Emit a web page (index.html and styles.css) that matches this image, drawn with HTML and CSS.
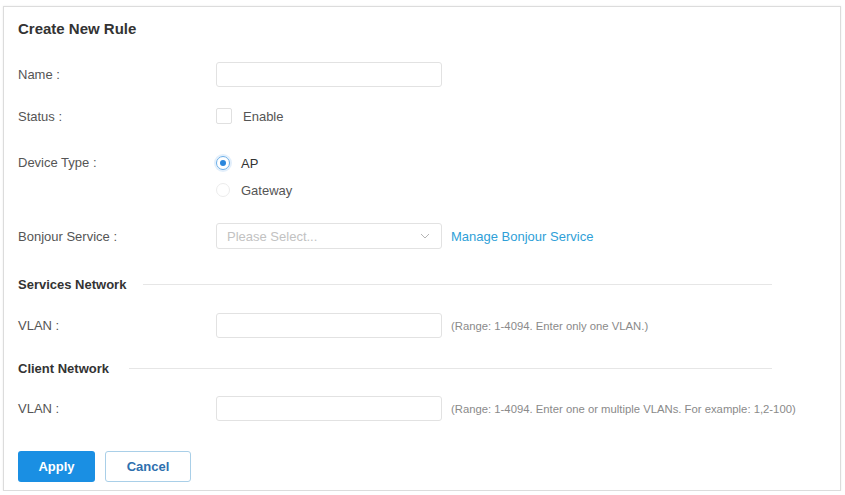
FILE: index.html
```html
<!DOCTYPE html>
<html lang="en">
<head>
    <meta charset="UTF-8">
    <meta name="viewport" content="width=device-width, initial-scale=1.0">
    <title>Create New Rule</title>
    <link rel="stylesheet" href="styles.css">
</head>
<body>
    <div class="card">
        <h2 class="title">Create New Rule</h2>

        <!-- Basic settings -->
        <div class="row row-name">
            <label class="label" for="ruleName">Name :</label>
            <input class="field" type="text" id="ruleName" />
        </div>

        <div class="row row-status">
            <span class="label">Status :</span>
            <label class="check">
                <span class="box"></span>
                <span>Enable</span>
            </label>
        </div>

        <div class="row row-device">
            <span class="label">Device Type :</span>
            <div class="radio-group">
                <label class="radio">
                    <span class="dot checked"></span>
                    <span class="radio-text">AP</span>
                </label>
                <label class="radio">
                    <span class="dot"></span>
                    <span>Gateway</span>
                </label>
            </div>
        </div>

        <div class="row row-bonjour">
            <span class="label">Bonjour Service :</span>
            <div class="field select">
                <span class="placeholder">Please Select...</span>
                <svg class="chevron" width="10" height="6" viewBox="0 0 10 6">
                    <polyline points="1,1 5,5 9,1" fill="none" stroke="#b5b5b5" stroke-width="1" />
                </svg>
            </div>
            <a class="link" href="#">Manage Bonjour Service</a>
        </div>

        <!-- Services network -->
        <div class="section section-services">
            <span class="section-title">Services Network</span>
            <span class="section-line"></span>
        </div>

        <div class="row row-vlan1">
            <label class="label" for="serviceVlan">VLAN :</label>
            <input class="field" type="text" id="serviceVlan" />
            <span class="hint">(Range: 1-4094. Enter only one VLAN.)</span>
        </div>

        <!-- Client network -->
        <div class="section section-client">
            <span class="section-title">Client Network</span>
            <span class="section-line"></span>
        </div>

        <div class="row row-vlan2">
            <label class="label" for="clientVlan">VLAN :</label>
            <input class="field" type="text" id="clientVlan" />
            <span class="hint">(Range: 1-4094. Enter one or multiple VLANs. For example: 1,2-100)</span>
        </div>

        <div class="actions">
            <button class="btn btn-apply">Apply</button>
            <button class="btn btn-cancel">Cancel</button>
        </div>
    </div>
</body>
</html>
```

FILE: styles.css
```css
body {
    margin: 0;
    background-color: #ffffff;
    font-family: "Liberation Sans", Arial, sans-serif;
    font-size: 13px;
    color: #555555;
}
.card {
    margin: 6px 3px 0 3px;
    width: 838px;
    height: 485px;
    box-sizing: border-box;
    border: 1px solid #dcdcdc;
    box-shadow: 0 0 2px rgba(0, 0, 0, 0.08);
    padding: 0 0 0 14px;
    display: flex;
    flex-direction: column;
}
.title {
    margin: 9px 0 0 0;
    height: 26px;
    line-height: 26px;
    font-size: 15px;
    font-weight: bold;
    color: #333333;
}
.row {
    display: flex;
    align-items: center;
}
.label {
    width: 198px;
    flex-shrink: 0;
    color: #555555;
}
.row-name { margin-top: 20px; height: 25px; }
.row-status { margin-top: 21px; height: 16px; }
.row-device { margin-top: 29px; align-items: flex-start; }
.row-device .label { line-height: 20px; }
.row-bonjour { margin-top: 23px; height: 26px; }
.row-vlan1 { margin-top: 21px; height: 25px; }
.row-vlan2 { margin-top: 20px; height: 25px; }
.field {
    width: 226px;
    height: 25px;
    box-sizing: border-box;
    border: 1px solid #e2e2e2;
    border-radius: 3px;
    padding: 0 10px;
    font-family: inherit;
    font-size: 13px;
    outline: none;
}
.check {
    display: flex;
    align-items: center;
    gap: 11px;
    color: #555555;
}
.box {
    width: 14px;
    height: 14px;
    border: 1px solid #e0e0e0;
    border-radius: 2px;
}
.radio-group {
    display: flex;
    flex-direction: column;
    gap: 7px;
}
.radio {
    display: flex;
    align-items: center;
    gap: 11px;
    height: 20px;
    color: #555555;
}
.radio-text {
    color: #333333;
}
.dot {
    width: 14px;
    height: 14px;
    box-sizing: border-box;
    border: 1px solid #ececec;
    border-radius: 50%;
    position: relative;
}
.dot.checked {
    border-color: #6aaee8;
    box-shadow: 0 0 0 2px #e3effb;
}
.dot.checked::after {
    content: "";
    position: absolute;
    left: 3px;
    top: 3px;
    width: 6px;
    height: 6px;
    border-radius: 50%;
    background-color: #2a86dc;
}
.select {
    display: flex;
    align-items: center;
    justify-content: space-between;
    height: 26px;
}
.placeholder {
    color: #c2c2c2;
}
.chevron {
    margin-right: 1px;
}
.link {
    margin-left: 9px;
    color: #2f9fd8;
    text-decoration: none;
}
.section {
    display: flex;
    align-items: center;
    height: 16px;
}
.section-services { margin-top: 27px; }
.section-client { margin-top: 22px; }
.section-title {
    font-weight: bold;
    color: #333333;
}
.section-line {
    height: 1px;
    background-color: #e6e6e6;
    margin-right: 68px;
    flex: 1;
}
.section-services .section-line { margin-left: 17px; }
.section-client .section-line { margin-left: 20px; }
.hint {
    margin-left: 9px;
    font-size: 11.3px;
    color: #8a8a8a;
}
.actions {
    margin-top: 30px;
    display: flex;
    gap: 10px;
}
.btn {
    height: 31px;
    border-radius: 3px;
    font-family: inherit;
    font-size: 13px;
    font-weight: bold;
    cursor: pointer;
}
.btn-apply {
    width: 77px;
    border: none;
    background-color: #1a8fe3;
    color: #ffffff;
}
.btn-cancel {
    width: 86px;
    border: 1px solid #a9cfe8;
    background-color: #ffffff;
    color: #2e6fae;
}
```
